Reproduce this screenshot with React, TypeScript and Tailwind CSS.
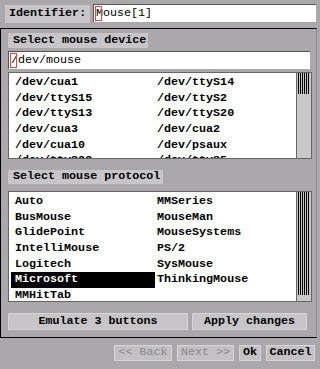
import React from "react";

type Row = [string, string];

function Thumb({ h }: { h: string }) {
  return (
    <div
      className={`ml-[1px] w-[12px] ${h} bg-[repeating-linear-gradient(90deg,#000000_0px,#000000_1px,#c8c8c8_1px,#c8c8c8_2px)]`}
    />
  );
}

function List({
  rows,
  selected,
  height,
  thumb,
}: {
  rows: Row[];
  selected?: string;
  height: string;
  thumb: React.ReactNode;
}) {
  return (
    <div className={`flex w-[304px] ${height} border border-[#666666] bg-white`}>
      <div className="flex-1 overflow-hidden pl-[2px] pt-[2px]">
        {rows.map(([a, b], i) => (
          <div key={i} className="flex h-[15.7px] leading-[15.7px] font-bold whitespace-nowrap">
            <div
              className={`w-[144px] pl-[4px] ${
                a === selected ? "bg-black text-white" : "text-black"
              }`}
            >
              {a}
            </div>
            <div className="pl-[2px] text-black">{b}</div>
          </div>
        ))}
      </div>
      <div className="w-[15px] border-l border-[#666666] bg-[#c8c8c8]">{thumb}</div>
    </div>
  );
}

function Btn({
  w,
  children,
  disabled,
}: {
  w: string;
  children: React.ReactNode;
  disabled?: boolean;
}) {
  return (
    <div
      className={`${w} h-[16px] flex items-center justify-center border border-[#d6d6d6] bg-[#c3c1c3] leading-none whitespace-nowrap ${
        disabled ? "text-[#8a8a8a] font-normal" : "text-black font-bold"
      }`}
    >
      {children}
    </div>
  );
}

export default function App() {
  const devices: Row[] = [
    ["/dev/cua1", "/dev/ttyS14"],
    ["/dev/ttyS15", "/dev/ttyS2"],
    ["/dev/ttyS13", "/dev/ttyS20"],
    ["/dev/cua3", "/dev/cua2"],
    ["/dev/cua10", "/dev/psaux"],
    ["/dev/ttyS22", "/dev/ttyS5"],
  ];
  const protocols: Row[] = [
    ["Auto", "MMSeries"],
    ["BusMouse", "MouseMan"],
    ["GlidePoint", "MouseSystems"],
    ["IntelliMouse", "PS/2"],
    ["Logitech", "SysMouse"],
    ["Microsoft", "ThinkingMouse"],
    ["MMHitTab", ""],
  ];

  return (
    <div className="w-[320px] h-[369px] overflow-hidden bg-[#aaa8aa] font-['Liberation_Mono',monospace] text-[11.7px] text-black">
      {/* top row */}
      <div className="flex h-[28px] items-start">
        <div className="ml-[5px] mt-[5px] flex h-[18px] w-[85px] items-center bg-[#c7c5c7] pl-[4px] font-bold">
          Identifier:
        </div>
        <div className="relative ml-[3px] mt-[4px] flex h-[18px] w-[223px] items-center border-l border-t border-[#555555] bg-white pl-[2px]">
          Mouse[1]
          <span className="absolute left-[1px] top-[1px] h-[15px] w-[7px] border border-[#e04848]" />
        </div>
      </div>

      {/* main panel */}
      <div className="flex h-[310px] w-[317px] flex-col border border-black border-r-[#8a888a] pl-[7px] pt-[4px]">
        <div className="flex h-[15px] w-[140px] items-center bg-[#c7c5c7] pl-[5px] font-bold">
          Select mouse device
        </div>
        <div className="relative mt-[3px] flex h-[18px] w-[302px] items-center border-l border-t border-[#555555] bg-white pl-[2px]">
          /dev/mouse
          <span className="absolute left-[1px] top-[1px] h-[15px] w-[7px] border border-[#e04848]" />
        </div>
        <div className="mt-[3px]">
          <List rows={devices} height="h-[87px]" thumb={<Thumb h="h-[21px]" />} />
        </div>
        <div className="mt-[11px] flex h-[14px] w-[155px] items-center bg-[#c7c5c7] pl-[5px] font-bold">
          Select mouse protocol
        </div>
        <div className="mt-[7px]">
          <List
            rows={protocols}
            selected="Microsoft"
            height="h-[111px]"
            thumb={<Thumb h="h-[103px]" />}
          />
        </div>
        <div className="mt-[11px] flex h-[17px] gap-[4px]">
          <div className="flex h-[17px] w-[180px] items-center justify-center border border-[#d6d6d6] bg-[#c7c5c7] font-bold">
            Emulate 3 buttons
          </div>
          <div className="flex h-[17px] w-[115px] items-center justify-center border border-[#d6d6d6] bg-[#c7c5c7] font-bold">
            Apply changes
          </div>
        </div>
      </div>

      {/* bottom bar */}
      <div className="flex pl-[114px] pt-[7px]">
        <Btn w="w-[58px]" disabled>
          &lt;&lt; Back
        </Btn>
        <div className="ml-[5px]">
          <Btn w="w-[57px]" disabled>
            Next &gt;&gt;
          </Btn>
        </div>
        <div className="ml-[5px]">
          <Btn w="w-[22px]">Ok</Btn>
        </div>
        <div className="ml-[5px]">
          <Btn w="w-[49px]">Cancel</Btn>
        </div>
      </div>
    </div>
  );
}
